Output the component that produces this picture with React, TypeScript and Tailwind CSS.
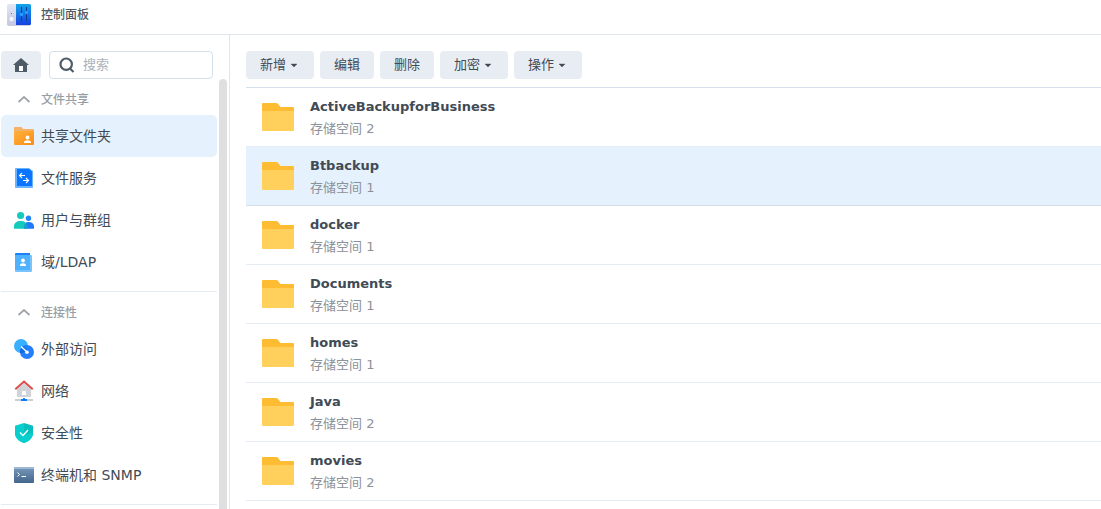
import React from "react";

type Item = { label: string; icon: React.ReactNode; active?: boolean };

function AppIcon() {
  return (
    <svg className="size-6" viewBox="0 0 24 24" aria-hidden="true">
      <defs>
        <linearGradient id="appBlue" x1="0" y1="0" x2="0" y2="1">
          <stop offset="0" stopColor="#10a5e8" />
          <stop offset=".5" stopColor="#1272e8" />
          <stop offset="1" stopColor="#1740e0" />
        </linearGradient>
        <linearGradient id="appGrey" x1="0" y1="0" x2="0" y2="1">
          <stop offset="0" stopColor="#e4e6f6" />
          <stop offset="1" stopColor="#c4c8e2" />
        </linearGradient>
      </defs>
      <rect x="0" y="2" width="24" height="21" rx="2" fill="#9aa0b4" opacity=".5" />
      <path d="M1.500 1H9v21H1.500A1.500 1.500 0 0 1 0 20.500v-18A1.500 1.500 0 0 1 1.500 1z" fill="url(#appGrey)" />
      <path d="M9 1h13.500A1.500 1.500 0 0 1 24 2.500v18a1.500 1.500 0 0 1-1.500 1.500H9z" fill="url(#appBlue)" />
      <circle cx="4.500" cy="10.500" r=".6" fill="#5c6078" />
      <circle cx="4.500" cy="16" r="2.700" fill="#f4f5fd" stroke="#b4b9d8" strokeWidth=".6" />
      <path d="M14 4h1v14h-1zM19 4h1v14h-1z" fill="#0d3a8c" />
      <circle cx="14.500" cy="11.500" r="1.700" fill="#2a9bff" />
      <circle cx="19.500" cy="9.500" r="1.700" fill="#2a9bff" />
    </svg>
  );
}

function SharedFolderIcon() {
  return (
    <svg className="size-5" viewBox="0 0 20 20" aria-hidden="true">
      <defs>
        <linearGradient id="orange" x1="0" y1="0" x2="1" y2="1">
          <stop offset="0" stopColor="#ffb23e" />
          <stop offset="1" stopColor="#fb8c14" />
        </linearGradient>
      </defs>
      <path d="M0 2a1 1 0 0 1 1-1h6.500L9 3h10a1 1 0 0 1 1 1v3H0z" fill="#f5b266" />
      <path d="M0 5h20v13a1 1 0 0 1-1 1H1a1 1 0 0 1-1-1z" fill="url(#orange)" />
      <circle cx="13.500" cy="11.500" r="1.900" fill="#fff" />
      <path d="M10 17v-.6c0-1.300 1.400-2.200 3.500-2.200s3.500.9 3.500 2.200v.6z" fill="#fff" />
    </svg>
  );
}

function FileServiceIcon() {
  return (
    <svg className="size-5" viewBox="0 0 20 20" aria-hidden="true">
      <path d="M2 0h13l4 3v16a1 1 0 0 1-1 1H2a1 1 0 0 1-1-1V1a1 1 0 0 1 1-1z" fill="#69b3ff" />
      <path d="M3 1h12l3 2.500V18H3z" fill="#0a75ff" />
      <path d="M8 5L5.500 7.500 8 10M5.500 7.500H11M12 10l2.500 2.500L12 15M14.500 12.500H9" fill="none" stroke="#fff" strokeWidth="1.100" />
    </svg>
  );
}

function UsersIcon() {
  return (
    <svg className="size-5" viewBox="0 0 20 20" aria-hidden="true">
      <circle cx="14.500" cy="8.200" r="2.700" fill="#2384fb" />
      <path d="M9.500 18.800v-2.500c0-2.500 2-4.300 5.200-4.300 3.300 0 5.300 1.800 5.300 4.300v2.500z" fill="#1f7afb" />
      <circle cx="6.600" cy="5.500" r="3.600" fill="#16c9bd" />
      <path d="M0 18.800v-2.600C0 13 2.600 11 6.600 11s6.600 2 6.600 5.200v2.600z" fill="#16c9bd" />
      <path d="M10 18.800v-2.400c0-1.900 1-3.200 2.500-3.900.5.800.8 2 .8 3.400v2.900z" fill="#1d9bd6" />
    </svg>
  );
}

function DirectoryIcon() {
  return (
    <svg className="size-5" viewBox="0 0 20 20" aria-hidden="true">
      <path d="M2 1h14v3H1V2a1 1 0 0 1 1-1z" fill="#1c82fa" />
      <path d="M1 3h16a1 1 0 0 1 1 1v15a1 1 0 0 1-1 1H2a1 1 0 0 1-1-1z" fill="#78c4ff" />
      <path d="M1 3h15v15H1z" fill="#50b2ff" />
      <circle cx="9" cy="8.500" r="1.900" fill="#fff" />
      <path d="M6 14v-.5c0-1.400 1.200-2.300 3-2.300s3 .9 3 2.300v.5z" fill="#fff" />
    </svg>
  );
}

function ExternalIcon() {
  return (
    <svg className="size-5" viewBox="0 0 20 20" aria-hidden="true">
      <defs>
        <linearGradient id="lens" x1="1" y1="0" x2="0" y2="1">
          <stop offset="0" stopColor="#2788fb" />
          <stop offset="1" stopColor="#075fe0" />
        </linearGradient>
      </defs>
      <circle cx="7" cy="7" r="7" fill="#38b0ff" />
      <circle cx="13" cy="13" r="7" fill="#257ffc" />
      <path d="M13.940 6.060A7 7 0 0 1 6.060 13.940 7 7 0 0 1 13.940 6.060z" fill="url(#lens)" />
      <path d="M7 7.500l6 5.500" stroke="#fff" strokeWidth="1.200" />
      <circle cx="13" cy="13.200" r="1.800" fill="#fff" />
    </svg>
  );
}

function NetworkIcon() {
  return (
    <svg className="h-[22px] w-5" viewBox="0 0 20 22" aria-hidden="true">
      <path d="M10 3l7 6.500V17H3V9.500z" fill="#d0d4d9" />
      <path d="M1.300 9.200L10 1.500l8.700 7.700" fill="none" stroke="#dc4c4a" strokeWidth="2" />
      <rect x="8" y="11" width="4" height="4" rx=".5" fill="#fff" />
      <path d="M1 19h18v2H1z" fill="#cbcfd4" />
      <path d="M9 18h2v1h2v2H7v-2h2z" fill="#1279ff" />
    </svg>
  );
}

function ShieldIcon() {
  return (
    <svg className="size-5" viewBox="0 0 20 20" aria-hidden="true">
      <path d="M10 0l9 2.800V10c0 4.500-3.300 8-9 10z" fill="#08bfbf" />
      <path d="M10 0L1 2.800V10c0 4.500 3.300 8 9 10z" fill="#08cfcd" />
      <path d="M19 10c0 4.500-3.300 8-9 10-5.700-2-9-5.500-9-10L10 12z" fill="#08cfcd" />
      <path d="M6 9.500l3 3 5-5.500" fill="none" stroke="#fff" strokeWidth="1.300" />
    </svg>
  );
}

function TerminalIcon() {
  return (
    <svg className="size-5" viewBox="0 0 20 20" aria-hidden="true">
      <defs>
        <linearGradient id="term" x1="0" y1="0" x2="0" y2="1">
          <stop offset="0" stopColor="#7799ba" />
          <stop offset="1" stopColor="#45668c" />
        </linearGradient>
      </defs>
      <rect x="0" y="2" width="20" height="16" rx="1" fill="url(#term)" />
      <path d="M1 2h18a1 1 0 0 1 1 1v1H0V3a1 1 0 0 1 1-1z" fill="#9cb8d2" />
      <path d="M3.500 7.500l2 2-2 2M7.500 11.500H12" fill="none" stroke="#fff" strokeWidth="1" />
    </svg>
  );
}

function FolderIcon() {
  return (
    <svg className="h-7 w-8" viewBox="0 0 32 28" aria-hidden="true">
      <path d="M0 1a1 1 0 0 1 1-1h13.500c.6 0 1 .2 1.400.7L18.500 4H31a1 1 0 0 1 1 1v5H0z" fill="#fdbc31" />
      <path d="M0 8h32v19a1 1 0 0 1-1 1H1a1 1 0 0 1-1-1z" fill="#ffd15c" />
    </svg>
  );
}

const sections: { title: string; items: Item[] }[] = [
  {
    title: "文件共享",
    items: [
      { label: "共享文件夹", icon: <SharedFolderIcon />, active: true },
      { label: "文件服务", icon: <FileServiceIcon /> },
      { label: "用户与群组", icon: <UsersIcon /> },
      { label: "域/LDAP", icon: <DirectoryIcon /> },
    ],
  },
  {
    title: "连接性",
    items: [
      { label: "外部访问", icon: <ExternalIcon /> },
      { label: "网络", icon: <NetworkIcon /> },
      { label: "安全性", icon: <ShieldIcon /> },
      { label: "终端机和 SNMP", icon: <TerminalIcon /> },
    ],
  },
];

const actions = [
  { label: "新增", menu: true },
  { label: "编辑", menu: false },
  { label: "删除", menu: false },
  { label: "加密", menu: true },
  { label: "操作", menu: true },
];

const folders = [
  { name: "ActiveBackupforBusiness", volume: 2 },
  { name: "Btbackup", volume: 1, selected: true },
  { name: "docker", volume: 1 },
  { name: "Documents", volume: 1 },
  { name: "homes", volume: 1 },
  { name: "Java", volume: 2 },
  { name: "movies", volume: 2 },
];

function Section({ title, items }: { title: string; items: Item[] }) {
  return (
    <section className="shrink-0 border-b border-[#e6ecf3] pb-2">
      <button type="button" className="flex h-9 w-full items-center gap-[10px] pt-1.5 pl-4 text-xs font-medium text-[#989ea5]">
        <svg className="h-3 w-3.5" viewBox="0 0 14 12" aria-hidden="true">
          <path d="M1.500 8l5.500-5 5.500 5" fill="none" stroke="#a0a5ab" strokeWidth="1.700" />
        </svg>
        {title}
      </button>
      <ul>
        {items.map((item) => (
          <li key={item.label}>
            <a
              href="#"
              className={`flex h-[42px] items-center gap-[7px] rounded-[5px] px-[13px] text-sm ${item.active ? "bg-[#e5f1fd]" : ""}`}
            >
              {item.icon}
              {item.label}
            </a>
          </li>
        ))}
      </ul>
    </section>
  );
}

export default function App() {
  return (
    <div className="flex h-screen flex-col overflow-hidden bg-white font-['DejaVu_Sans','Noto_Sans_CJK_SC',sans-serif] text-[#414b55]">
      <header className="flex h-[35px] shrink-0 items-center gap-[10px] border-b border-[#dfe6ef] px-[7px] pb-1">
        <AppIcon />
        <h1 className="text-xs font-medium text-[#505a64]">控制面板</h1>
      </header>
      <div className="flex min-h-0 flex-1">
        <aside className="flex w-[230px] shrink-0 flex-col border-r border-[#dfe6ef] pt-4 pl-px">
          <div className="flex shrink-0 gap-2 pr-4">
            <button type="button" aria-label="主页" className="flex h-7 w-10 items-center justify-center rounded bg-[#e8edf4]">
              <svg className="size-4" viewBox="0 0 16 16" aria-hidden="true">
                <path d="M8 1l8 7h-2v7H2V8H0z" fill="#4f5c67" />
                <path d="M6 9h4v5H6z" fill="#fff" />
              </svg>
            </button>
            <label className="flex h-7 min-w-0 flex-1 items-center gap-2 rounded border border-[#d3dfea] px-[9px]">
              <svg className="size-4 shrink-0" viewBox="0 0 16 16" aria-hidden="true">
                <circle cx="7.200" cy="7.200" r="5.700" fill="none" stroke="#4f5c67" strokeWidth="2.200" />
                <path d="M10.500 11l4 4" stroke="#4f5c67" strokeWidth="2.200" />
              </svg>
              <input
                type="search"
                aria-label="搜索"
                placeholder="搜索"
                className="w-full min-w-0 bg-transparent text-[13px] outline-none placeholder:text-[#acb2b8]"
              />
            </label>
          </div>
          <div className="flex min-h-0 flex-1 gap-0.5 pr-0.5">
            <nav className="flex min-w-0 flex-1 flex-col overflow-hidden">
              {sections.map((section) => (
                <Section key={section.title} {...section} />
              ))}
            </nav>
            <div className="w-2 rounded-t bg-[#dfdfdf]" />
          </div>
        </aside>
        <main className="flex min-w-0 flex-1 flex-col pt-4 pl-4">
          <div className="flex shrink-0 gap-1.5 pb-2">
            {actions.map((action) => (
              <button
                key={action.label}
                type="button"
                className="flex h-7 items-center gap-1 rounded bg-[#e8edf4] px-3.5 text-[13px]"
              >
                {action.label}
                {action.menu && (
                  <svg className="h-1 w-2.5" viewBox="0 0 10 4" aria-hidden="true">
                    <path d="M1 1h6L4 4z" fill="#414b55" stroke="#414b55" strokeWidth=".4" />
                  </svg>
                )}
              </button>
            ))}
          </div>
          <ul className="min-h-0 flex-1 overflow-hidden border-t border-[#d3dfea]">
            {folders.map((folder) => (
              <li
                key={folder.name}
                className={`flex h-[59px] items-center gap-4 border-b px-4 text-[13px] ${
                  folder.selected ? "border-[#d3dfea] bg-[#e5f1fd]" : "border-[#e6ecf3]"
                }`}
              >
                <FolderIcon />
                <div className="pt-0.5 leading-[22px]">
                  <p className="font-bold">{folder.name}</p>
                  <p className="text-[#8c9299]">存储空间 {folder.volume}</p>
                </div>
              </li>
            ))}
          </ul>
        </main>
      </div>
    </div>
  );
}
